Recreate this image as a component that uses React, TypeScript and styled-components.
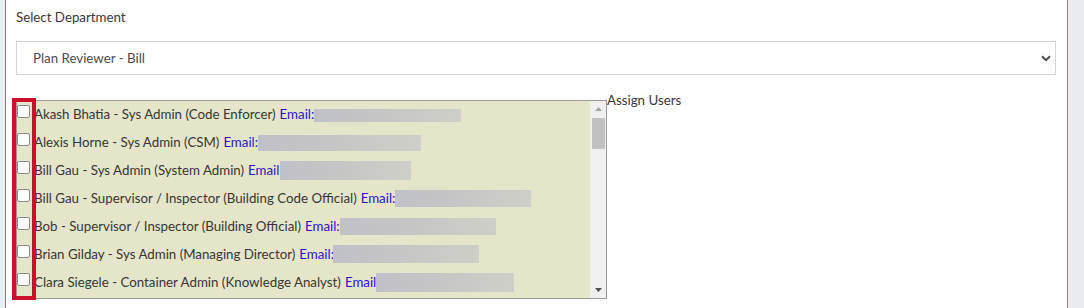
import React from "react";
import styled, { createGlobalStyle } from "styled-components";

const Global = createGlobalStyle`
  html, body { margin: 0; padding: 0; background: #ffffff; }
  body { font-family: Lato, "Liberation Sans", sans-serif; }
`;

const Page = styled.div`
  display: flex;
  height: 308px;
  overflow: hidden;
`;

const SideStrip = styled.div<{ $side: "left" | "right" }>`
  flex: none;
  width: ${(p) => (p.$side === "left" ? "5px" : "16px")};
  background: #e9edf2;
  ${(p) =>
    p.$side === "left"
      ? "border-right: 1px solid #5b8fc4;"
      : "border-left: 1px solid #5b8fc4;"}
`;

const Main = styled.div`
  flex: 1;
  min-width: 0;
  padding: 7px 11px 0 10px;
  display: flex;
  flex-direction: column;
`;

const FieldLabel = styled.div`
  font-size: 13.3px;
  line-height: 20px;
  color: #383838;
`;

const SelectBox = styled.div`
  margin-top: 14px;
  height: 32px;
  border: 1px solid #d4d4e0;
  display: flex;
  align-items: center;
  justify-content: space-between;
  padding: 0 4px 0 16px;
  font-size: 13.3px;
  color: #474c52;
`;

const Chevron = styled.svg`
  width: 10px;
  height: 7px;
  flex: none;
`;

const UsersRow = styled.div`
  margin-top: 25px;
  display: flex;
  align-items: flex-start;
  position: relative;
`;

const ListBox = styled.div`
  width: 589px;
  height: 197px;
  border: 1px solid #9a9a9a;
  display: flex;
  background: #e4e5c9;
`;

const ListItems = styled.div`
  flex: 1;
  min-width: 0;
  overflow: hidden;
`;

const Item = styled.div`
  height: 28px;
  display: flex;
  align-items: flex-start;
  white-space: nowrap;
`;

const Check = styled.span`
  flex: none;
  width: 11px;
  height: 11px;
  margin-top: 4px;
  border: 1px solid #8a8a8a;
  border-radius: 2px;
  background: #ffffff;
`;

const ItemText = styled.span`
  margin-left: 4px;
  font-size: 13.3px;
  line-height: 26px;
  color: #363636;
  display: flex;
  align-items: center;
  height: 26px;
`;

const EmailLabel = styled.span`
  color: #2b14c8;
  margin-left: 4px;
`;

const Redacted = styled.span<{ $w: number; $h: number; $shift: number; $dy: number }>`
  display: inline-block;
  width: ${(p) => p.$w}px;
  height: ${(p) => p.$h}px;
  margin-left: ${(p) => p.$shift}px;
  position: relative;
  top: ${(p) => p.$dy}px;
  background: linear-gradient(90deg, #c0c0c8 0%, #c5c5c5 45%, #cfcfc9 100%);
`;

const ScrollBar = styled.div`
  flex: none;
  width: 16px;
  background: #f0f0f0;
  display: flex;
  flex-direction: column;
  align-items: center;
`;

const ScrollBtn = styled.div`
  height: 16px;
  width: 16px;
  display: flex;
  align-items: center;
  justify-content: center;
`;

const Thumb = styled.div`
  margin-top: 1px;
  width: 13px;
  height: 31px;
  background: #c1c1c1;
`;

const Spacer = styled.div`
  flex: 1;
`;

const AssignLabel = styled.div`
  margin-top: -10px;
  font-size: 13.3px;
  line-height: 20px;
  color: #383838;
`;

const Highlight = styled.div`
  position: absolute;
  left: -4px;
  top: -2px;
  width: 16px;
  height: 194px;
  border: 4px solid #cc0f2a;
  pointer-events: none;
`;

type User = { name: string; w: number; h: number; shift: number; dy: number };

const users: User[] = [
  { name: "Akash Bhatia - Sys Admin (Code Enforcer)", w: 147, h: 13, shift: 0, dy: 1 },
  { name: "Alexis Horne - Sys Admin (CSM)", w: 163, h: 16, shift: 0, dy: 1 },
  { name: "Bill Gau - Sys Admin (System Admin)", w: 131, h: 19, shift: -3, dy: 0 },
  { name: "Bill Gau - Supervisor / Inspector (Building Code Official)", w: 136, h: 17, shift: 0, dy: 0 },
  { name: "Bob - Supervisor / Inspector (Building Official)", w: 156, h: 17, shift: 0, dy: 0 },
  { name: "Brian Gilday - Sys Admin (Managing Director)", w: 146, h: 18, shift: -1, dy: 0 },
  { name: "Clara Siegele - Container Admin (Knowledge Analyst)", w: 138, h: 19, shift: -4, dy: 0 },
];

export default function App() {
  return (
    <>
      <Global />
      <Page>
        <SideStrip $side="left" />
        <Main>
          <FieldLabel>Select Department</FieldLabel>
          <SelectBox>
            <span>Plan Reviewer - Bill</span>
            <Chevron viewBox="0 0 10 7">
              <path d="M1 1.2 L5 5.2 L9 1.2" fill="none" stroke="#4d4d4d" strokeWidth="2" />
            </Chevron>
          </SelectBox>
          <UsersRow>
            <ListBox>
              <ListItems>
                {users.map((u) => (
                  <Item key={u.name}>
                    <Check />
                    <ItemText>
                      {u.name}
                      <EmailLabel>Email:</EmailLabel>
                      <Redacted $w={u.w} $h={u.h} $shift={u.shift} $dy={u.dy} />
                    </ItemText>
                  </Item>
                ))}
              </ListItems>
              <ScrollBar>
                <ScrollBtn>
                  <svg width="7" height="4" viewBox="0 0 7 4">
                    <path d="M0 4 L3.5 0 L7 4 Z" fill="#a3a3a3" />
                  </svg>
                </ScrollBtn>
                <Thumb />
                <Spacer />
                <ScrollBtn>
                  <svg width="7" height="4" viewBox="0 0 7 4">
                    <path d="M0 0 L3.5 4 L7 0 Z" fill="#505050" />
                  </svg>
                </ScrollBtn>
              </ScrollBar>
            </ListBox>
            <AssignLabel>Assign Users</AssignLabel>
            <Highlight />
          </UsersRow>
        </Main>
        <SideStrip $side="right" />
      </Page>
    </>
  );
}
